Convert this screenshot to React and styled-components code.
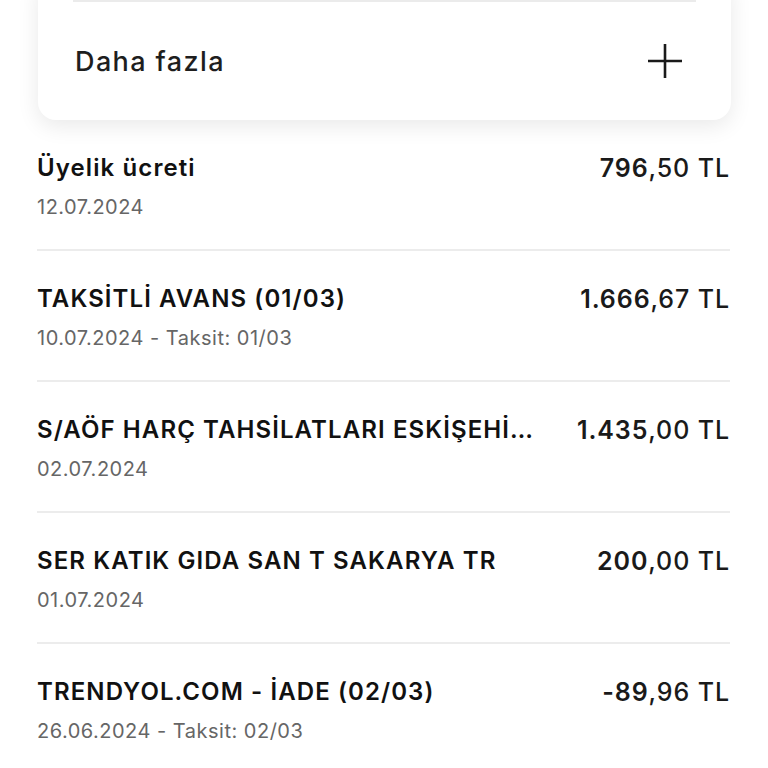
import styled, { createGlobalStyle } from 'styled-components'

const transactions = [
  { id: 1, title: 'Üyelik ücreti', date: '12.07.2024', whole: '796', cents: ',50' },
  { id: 2, title: 'TAKSİTLİ AVANS (01/03)', date: '10.07.2024 - Taksit: 01/03', whole: '1.666', cents: ',67' },
  { id: 3, title: 'S/AÖF HARÇ TAHSİLATLARI ESKİŞEHİR TR', date: '02.07.2024', whole: '1.435', cents: ',00' },
  { id: 4, title: 'SER KATIK GIDA SAN T SAKARYA TR', date: '01.07.2024', whole: '200', cents: ',00' },
  { id: 5, title: 'TRENDYOL.COM - İADE (02/03)', date: '26.06.2024 - Taksit: 02/03', whole: '-89', cents: ',96' },
]

const App = () => {
  return (
    <>
      <GlobalStyle />
      <Page>
        <Card>
          <CardDivider />
          <MoreRow>
            <MoreLabel>Daha fazla</MoreLabel>
            <svg width='36' height='36' viewBox='0 0 36 36'>
              <line x1='1' y1='18' x2='35' y2='18' stroke='#1a1a1a' strokeWidth='2.6' />
              <line x1='18' y1='1' x2='18' y2='35' stroke='#1a1a1a' strokeWidth='2.6' />
            </svg>
          </MoreRow>
        </Card>
        <List>
          {transactions.map((t) => (
            <Row key={t.id}>
              <Info>
                <Title>{t.title}</Title>
                <DateText>{t.date}</DateText>
              </Info>
              <Amount>
                <strong>{t.whole}</strong>
                {t.cents} TL
              </Amount>
            </Row>
          ))}
        </List>
      </Page>
    </>
  )
}

const GlobalStyle = createGlobalStyle`
  body {
    margin: 0;
    background: #fff;
    font-family: Inter, 'Noto Sans', sans-serif;
    color: #151515;
  }
`

const Page = styled.div`
  width: 768px;
  height: 768px;
  overflow: hidden;
`

const Card = styled.div`
  margin: -24px 37px 0 38px;
  padding-top: 24px;
  background: #fff;
  border-radius: 18px;
  box-shadow: 0 6px 22px rgba(0, 0, 0, 0.09);
`

const CardDivider = styled.div`
  height: 2px;
  margin: 0 35px;
  background: #ebebeb;
`

const MoreRow = styled.div`
  display: flex;
  align-items: center;
  justify-content: space-between;
  height: 118px;
  padding: 0 48px 0 37px;
`

const MoreLabel = styled.span`
  font-size: 27px;
  font-weight: 500;
  letter-spacing: 1.4px;
  color: #1e1e1e;
`

const List = styled.div`
  margin: 0 38px 0 37px;
`

const Row = styled.div`
  display: flex;
  justify-content: space-between;
  align-items: flex-start;
  gap: 20px;
  padding: 33px 0 29px;
  border-bottom: 2px solid #ececec;
`

const Info = styled.div`
  display: flex;
  flex-direction: column;
  gap: 11px;
  min-width: 0;
`

const Title = styled.div`
  font-size: 24px;
  line-height: 30px;
  font-weight: 600;
  letter-spacing: 1.1px;
  color: #111;
  white-space: nowrap;
  overflow: hidden;
  text-overflow: ellipsis;
  max-width: 496px;
`

const DateText = styled.div`
  font-size: 20px;
  line-height: 26px;
  letter-spacing: 0.5px;
  color: #666;
`

const Amount = styled.div`
  flex-shrink: 0;
  font-size: 25px;
  line-height: 30px;
  font-weight: 500;
  letter-spacing: 0.9px;
  color: #1a1a1a;

  strong {
    font-weight: 600;
  }
`

export default App
